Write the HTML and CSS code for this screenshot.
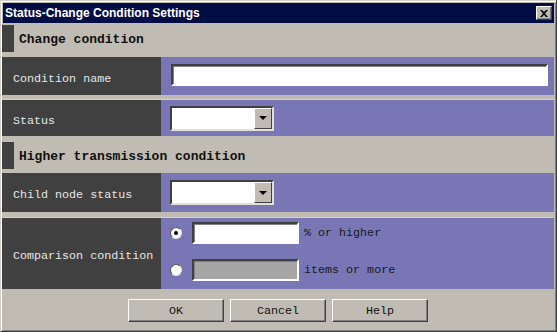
FILE: index.html
```html
<!DOCTYPE html>
<html lang="en">
<head>
    <meta charset="UTF-8">
    <title>Status-Change Condition Settings</title>
    <link rel="stylesheet" href="styles.css">
</head>
<body>
    <div class="window">
        <div class="titlebar">
            <span class="title">Status-Change Condition Settings</span>
            <button class="close-btn" aria-label="Close">
                <svg width="8" height="7" viewBox="0 0 8 7"><path d="M0 0h2l2 2 2-2h2L5 3.5 8 7H6L4 5 2 7H0l3-3.5z" fill="#000"/></svg>
            </button>
        </div>
        <div class="content">
            <!-- change condition -->
            <div class="section-head first">
                <span class="mark"></span>
                <span class="section-title">Change condition</span>
            </div>
            <div class="row">
                <div class="label">Condition name</div>
                <div class="field wide">
                    <input type="text" class="text-input full">
                </div>
            </div>
            <div class="row sep">
                <div class="label">Status</div>
                <div class="field">
                    <div class="select"><span class="select-btn"></span></div>
                </div>
            </div>
            <!-- higher transmission condition -->
            <div class="section-head second">
                <span class="mark"></span>
                <span class="section-title">Higher transmission condition</span>
            </div>
            <div class="row tall3">
                <div class="label">Child node status</div>
                <div class="field">
                    <div class="select"><span class="select-btn"></span></div>
                </div>
            </div>
            <div class="row compare">
                <div class="label">Comparison condition</div>
                <div class="field options">
                    <div class="option">
                        <span class="radio checked"></span>
                        <input type="text" class="text-input small">
                        <span class="unit">% or higher</span>
                    </div>
                    <div class="option">
                        <span class="radio"></span>
                        <input type="text" class="text-input small" disabled>
                        <span class="unit">items or more</span>
                    </div>
                </div>
            </div>
            <!-- buttons -->
            <div class="footer">
                <button class="btn">OK</button>
                <button class="btn">Cancel</button>
                <button class="btn">Help</button>
            </div>
        </div>
    </div>
</body>
</html>
```

FILE: styles.css
```css
* {
    margin: 0;
    padding: 0;
    box-sizing: border-box;
}
body {
    background-color: #c0bcb3;
    font-family: "Liberation Mono", monospace;
}
.window {
    width: 557px;
    height: 332px;
    display: flex;
    flex-direction: column;
    background-color: #c0bcb3;
    border: 1px solid;
    border-color: #d4d0c8 #404040 #404040 #d4d0c8;
    box-shadow: inset 1px 1px #fff, inset -1px -1px #808080;
    padding: 2px 2px 2px 2px;
}
.titlebar {
    height: 20px;
    background-color: #020e43;
    display: flex;
    align-items: center;
    justify-content: space-between;
    padding: 0 2px 0 2px;
}
.title {
    font-family: "Liberation Sans", Arial, sans-serif;
    font-weight: bold;
    font-size: 12px;
    color: #fff;
}
.close-btn {
    width: 16px;
    height: 14px;
    background-color: #c0bcb3;
    border: 1px solid;
    border-color: #fff #404040 #404040 #fff;
    box-shadow: inset -1px -1px #808080;
    display: flex;
    align-items: center;
    justify-content: center;
}
.content {
    flex: 1;
    display: flex;
    flex-direction: column;
    margin-left: -1px;
}
.section-head {
    display: flex;
    height: 27px;
    align-items: center;
}
.section-head.first {
    margin-top: 2px;
    margin-bottom: 5px;
}
.section-head.second {
    margin-top: 6px;
    margin-bottom: 4px;
}
.mark {
    width: 12px;
    align-self: stretch;
    background-color: #404040;
}
.section-title {
    font-weight: bold;
    font-size: 13px;
    color: #111;
    margin-left: 5px;
    padding-top: 2px;
}
.row {
    display: grid;
    grid-template-columns: 159px 1fr;
    height: 38px;
}
.row.sep {
    margin-top: 4px;
    height: 37px;
    border-top: 1px solid #d6d2ca;
}
.row.tall3 {
    height: 39px;
}
.row.compare {
    margin-top: 5px;
    height: 72px;
    border-top: 1px solid #d6d2ca;
}
.label {
    background-color: #404040;
    color: #e6e6e6;
    font-size: 11.7px;
    display: flex;
    align-items: center;
    padding: 5px 0 0 11px;
}
.field {
    background-color: #7976b6;
    display: flex;
    align-items: center;
    padding-left: 9px;
}
.field.wide {
    padding-left: 10px;
    padding-right: 6px;
    padding-bottom: 3px;
}
.text-input {
    height: 22px;
    background-color: #fff;
    border: 2px solid;
    border-color: #404040 #fff #fff #404040;
    box-shadow: inset 1px 1px #808080;
    outline: none;
}
.text-input.full {
    width: 100%;
}
.text-input.small {
    width: 107px;
}
.text-input:disabled {
    background-color: #a6a6a6;
}
.select {
    width: 104px;
    height: 25px;
    background-color: #fff;
    border: 2px solid;
    border-color: #404040 #e4e0d8 #e4e0d8 #404040;
    display: flex;
    justify-content: flex-end;
}
.select-btn {
    width: 18px;
    background-color: #c0bcb3;
    border: 1px solid;
    border-color: #fff #404040 #404040 #fff;
    display: flex;
    align-items: center;
    justify-content: center;
}
.select-btn::after {
    content: "";
    border-left: 4px solid transparent;
    border-right: 4px solid transparent;
    border-top: 4px solid #000;
}
.options {
    flex-direction: column;
    align-items: flex-start;
    justify-content: flex-start;
    padding-top: 4px;
    gap: 15px;
}
.option {
    display: flex;
    align-items: center;
}
.radio {
    width: 12px;
    height: 12px;
    border-radius: 50%;
    background-color: #fff;
    border: 1px solid;
    border-color: #555 #e8e8e8 #e8e8e8 #555;
    margin-right: 10px;
    display: flex;
    align-items: center;
    justify-content: center;
}
.radio.checked::after {
    content: "";
    width: 4px;
    height: 4px;
    border-radius: 50%;
    background-color: #000;
}
.unit {
    font-size: 11.7px;
    color: #1a1a1a;
    margin-left: 5px;
}
.footer {
    flex: 1;
    display: flex;
    justify-content: center;
    align-items: flex-start;
    gap: 6px;
    padding-top: 10px;
}
.btn {
    width: 96px;
    height: 23px;
    font-family: "Liberation Mono", monospace;
    font-size: 11.7px;
    color: #111;
    background-color: #c0bcb3;
    border: 1px solid;
    border-color: #fff #404040 #404040 #fff;
    box-shadow: inset -1px -1px #808080;
}
```
